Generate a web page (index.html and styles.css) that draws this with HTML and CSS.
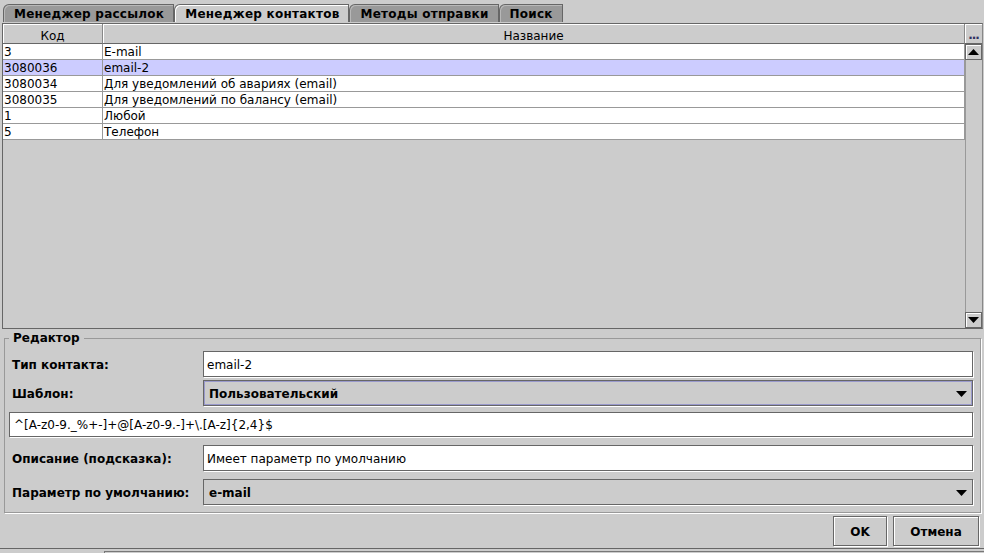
FILE: index.html
```html
<!DOCTYPE html>
<html lang="ru">
<head>
<meta charset="utf-8">
<title>Менеджер контактов</title>
<link rel="stylesheet" href="styles.css">
</head>
<body>
<div class="tabs">
  <div class="tab">Менеджер рассылок</div>
  <div class="tab active">Менеджер контактов</div>
  <div class="tab">Методы отправки</div>
  <div class="tab">Поиск</div>
</div>

<div class="tablewrap">
  <div class="tablearea">
    <div class="row head">
      <div class="cell">Код</div>
      <div class="cell">Название</div>
    </div>
    <div class="row"><div class="cell">3</div><div class="cell">E-mail</div></div>
    <div class="row selected"><div class="cell">3080036</div><div class="cell">email-2</div></div>
    <div class="row"><div class="cell">3080034</div><div class="cell">Для уведомлений об авариях (email)</div></div>
    <div class="row"><div class="cell">3080035</div><div class="cell">Для уведомлений по балансу (email)</div></div>
    <div class="row"><div class="cell">1</div><div class="cell">Любой</div></div>
    <div class="row"><div class="cell">5</div><div class="cell">Телефон</div></div>
  </div>
  <div class="vscroll">
    <div class="corner">...</div>
    <div class="sbtn"><svg width="11" height="6" viewBox="0 0 11 6"><path d="M0 6 L5.5 0 L11 6 Z" fill="#000"/></svg></div>
    <div class="track"></div>
    <div class="sbtn"><svg width="11" height="6" viewBox="0 0 11 6"><path d="M0 0 L11 0 L5.5 6 Z" fill="#000"/></svg></div>
  </div>
</div>

<fieldset class="editor">
  <legend>Редактор</legend>
  <div class="frow">
    <label class="flabel">Тип контакта:</label>
    <div class="field input">email-2</div>
  </div>
  <div class="frow gap-s">
    <label class="flabel">Шаблон:</label>
    <div class="field combo focused"><span>Пользовательский</span><svg width="11" height="6" viewBox="0 0 11 6"><path d="M0 0 L11 0 L5.5 6 Z" fill="#000"/></svg></div>
  </div>
  <div class="frow gap-m">
    <div class="field input full regex">^[A-z0-9._%+-]+@[A-z0-9.-]+\.[A-z]{2,4}$</div>
  </div>
  <div class="frow gap-l">
    <label class="flabel">Описание (подсказка):</label>
    <div class="field input">Имеет параметр по умолчанию</div>
  </div>
  <div class="frow gap-l">
    <label class="flabel">Параметр по умолчанию:</label>
    <div class="field combo"><span>e-mail</span><svg width="11" height="6" viewBox="0 0 11 6"><path d="M0 0 L11 0 L5.5 6 Z" fill="#000"/></svg></div>
  </div>
</fieldset>

<div class="buttons">
  <button class="btn ok">OK</button>
  <button class="btn cancel">Отмена</button>
</div>

<div class="footer"><div class="footer-inner"></div></div>
</body>
</html>
```

FILE: styles.css
```css
html, body {
  margin: 0;
  padding: 0;
}
body {
  width: 984px;
  height: 553px;
  overflow: hidden;
  background: #cccccc;
  font: 12px "DejaVu Sans", "Liberation Sans", sans-serif;
  color: #000;
}

/* Tabs */
.tabs {
  display: flex;
  align-items: flex-end;
  height: 18px;
  padding: 4px 0 0 3px;
}
.tab {
  box-sizing: border-box;
  height: 18px;
  padding: 0 9px 0 10px;
  border: 1px solid #666;
  border-bottom: none;
  border-top-left-radius: 6px;
  background: #999999;
  box-shadow: inset 1px 1px 0 #b8b8b8;
  font-weight: bold;
  letter-spacing: 0.25px;
  line-height: 18px;
  white-space: nowrap;
}
.tab.active {
  background: #cccccc;
  box-shadow: inset 1px 1px 0 #ffffff;
}

/* Table */
.tablewrap {
  display: flex;
  box-sizing: border-box;
  height: 306px;
  margin: 1px 1px 0 2px;
  border: 1px solid #666;
  border-right-color: #888;
}
.tablearea {
  flex: 1;
  background: #cccccc;
}
.row {
  display: grid;
  grid-template-columns: 100px 1fr;
  height: 16px;
  background: #ffffff;
}
.row.selected {
  background: #ccccff;
}
.cell {
  box-sizing: border-box;
  border-right: 1px solid #999;
  border-bottom: 1px solid #999;
  padding: 2px 0 0 1px;
  line-height: 13px;
  white-space: nowrap;
  overflow: hidden;
}
.row.head {
  height: 20px;
  background: #cccccc;
}
.row.head .cell {
  text-align: center;
  line-height: 24px;
  border-right-color: #888;
  border-bottom-color: #666;
  box-shadow: inset 1px 1px 0 #fff;
  padding: 0;
}

.vscroll {
  width: 17px;
  display: flex;
  flex-direction: column;
}
.corner {
  box-sizing: border-box;
  height: 20px;
  border-bottom: 1px solid #666;
  box-shadow: inset 1px 1px 0 #fff;
  font-weight: bold;
  line-height: 22px;
  text-align: center;
  letter-spacing: -1px;
  color: #303060;
}
.sbtn {
  box-sizing: border-box;
  height: 16px;
  border: 1px solid #666;
  box-shadow: inset 1px 1px 0 #fff;
  display: flex;
  align-items: center;
  justify-content: center;
}
.track {
  flex: 1;
  border-left: 1px solid #999;
}

/* Editor */
.editor {
  margin: 1px 3px 0 4px;
  padding: 5px 7px 7px 4px;
  border: 1px solid #999;
  box-shadow: 1px 1px 0 #fff;
}
.editor legend {
  padding: 0 4px;
  font-weight: bold;
  line-height: 16px;
}
.frow {
  display: flex;
  align-items: center;
  height: 26px;
}
.gap-s { margin-top: 3px; }
.gap-m { margin-top: 5px; }
.gap-l { margin-top: 8px; }
.flabel {
  box-sizing: border-box;
  width: 194px;
  padding: 2px 0 0 3px;
  font-weight: bold;
  white-space: nowrap;
}
.field {
  box-sizing: border-box;
  flex: 1;
  height: 26px;
  padding-top: 1px;
  border: 1px solid #666;
  box-shadow: 1px 1px 0 #fff;
  display: flex;
  align-items: center;
}
.field.full {
  height: 25px;
}
.input {
  background: #ffffff;
  padding-left: 3px;
}
.regex {
  padding-left: 4px;
  letter-spacing: 0;
}
.combo {
  background: #cccccc;
  font-weight: bold;
  padding: 1px 5px 0 5px;
  justify-content: space-between;
}
.combo.focused {
  box-shadow: inset 0 0 0 1px #9999cc, 1px 1px 0 #fff;
}

/* Buttons */
.buttons {
  display: flex;
  justify-content: flex-end;
  gap: 6px;
  margin-top: 3px;
  padding-right: 5px;
}
.btn {
  box-sizing: border-box;
  height: 30px;
  border: 1px solid #666;
  background: #cccccc;
  box-shadow: inset 1px 1px 0 #fff, 1px 1px 0 #fff;
  font: bold 12px "DejaVu Sans", "Liberation Sans", sans-serif;
  color: #000;
  padding: 1px 0 0 0;
}
.btn.ok { width: 54px; }
.btn.cancel { width: 86px; }

/* Footer */
.footer {
  margin-top: 2px;
  border-top: 1px solid #666;
  height: 4px;
}
.footer-inner {
  margin: 2px 0 0 104px;
  border-top: 1px solid #777;
  border-left: 1px solid #777;
  height: 3px;
  background: #cccccc;
}
```
